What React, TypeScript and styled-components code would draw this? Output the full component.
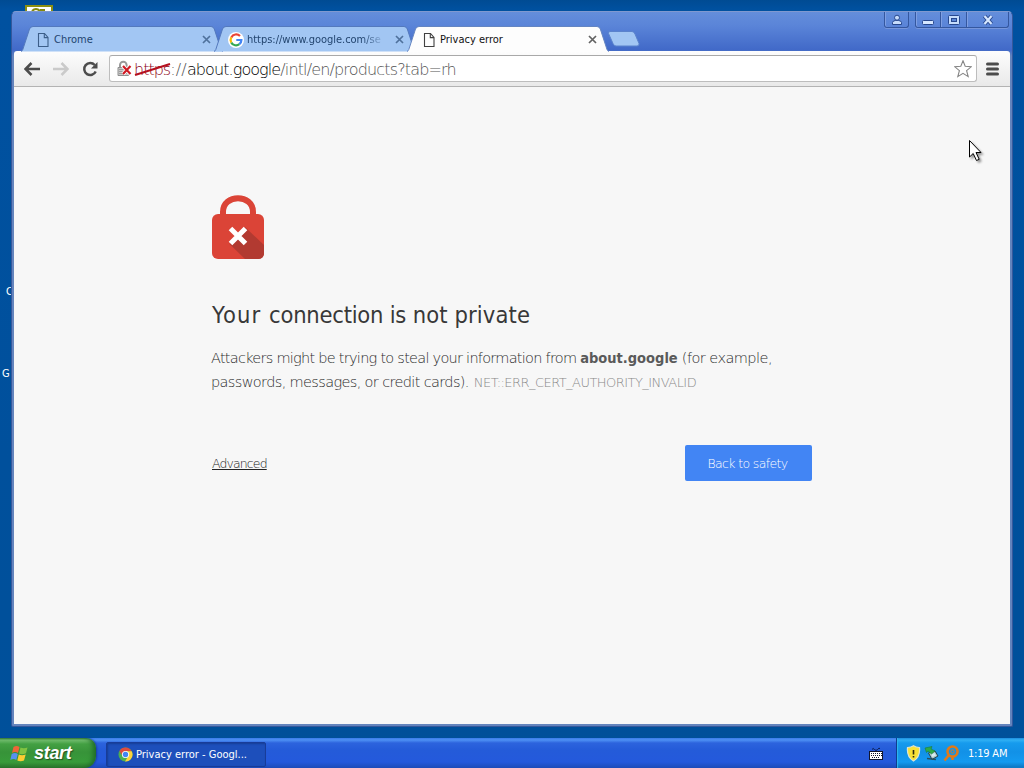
import React from 'react'
import styled, { createGlobalStyle } from 'styled-components'

const GlobalStyle = createGlobalStyle`
  * {
    box-sizing: border-box;
  }

  body {
    margin: 0;
    overflow: hidden;
    font-family: 'DejaVu Sans Condensed', 'DejaVu Sans', sans-serif;
    font-stretch: condensed;
    cursor: default;
  }

  svg {
    display: block;
    flex-shrink: 0;
  }
`

const Desktop = styled.div`
  position: relative;
  width: 1024px;
  height: 768px;
  overflow: hidden;
  display: flex;
  flex-direction: column;
  justify-content: space-between;
  background: linear-gradient(#004b93 0, #0051a0 10px, #00509c 60%, #00509a 100%);
`

const Shortcut = styled.div<{ $x: number; $y: number }>`
  position: absolute;
  left: ${p => p.$x}px;
  top: ${p => p.$y}px;
  color: #fff;
  font-size: 11px;
  line-height: 14px;
`

const Window = styled.div`
  position: relative;
  margin: 11px 11px 0 11px;
  width: 1002px;
  height: 716px;
  flex-shrink: 0;
  display: flex;
  flex-direction: column;
  padding: 0 2px 2px 2px;
  border: 1px solid #35589c;
  border-top-color: #8099cf;
  border-radius: 5px 5px 2px 2px;
  background: linear-gradient(#648edb 0, #5a84d8 14px, #4169c8 38px, #6484bd 44px, #6484bd 100%);
`

const TitleBar = styled.div`
  height: 39px;
  display: flex;
  justify-content: space-between;
  align-items: flex-start;
`

const TabStrip = styled.div`
  display: flex;
  padding: 14px 0 0 7px;
`

const TabItem = styled.div<{ $active?: boolean }>`
  position: relative;
  z-index: ${p => (p.$active ? 2 : 1)};
  width: 202px;
  height: 26px;
  margin-right: -9px;
  padding: 1px 12px 0 14px;
  display: flex;
  align-items: center;
  color: ${p => (p.$active ? '#111' : '#23456f')};

  > svg:first-child {
    position: absolute;
    top: 0;
    left: 0;
    z-index: -1;
  }
`

const TabTitle = styled.span<{ $fade?: boolean; $spacing?: number }>`
  flex: 1;
  margin-left: 3px;
  margin-right: 10px;
  white-space: nowrap;
  font-size: 11px;
  line-height: 16px;
  letter-spacing: ${p => p.$spacing || 0}px;
  ${p => p.$fade && 'mask-image: linear-gradient(90deg, #000 84%, rgba(0, 0, 0, 0.2) 97%);'}
`

const NewTab = styled.div`
  padding: 5px 0 0 7px;
`

const WindowControls = styled.div`
  display: flex;
  padding-right: 1px;
`

const ControlGroup = styled.div`
  display: flex;
  height: 16px;
  margin-left: 6px;
  border: 1px solid #34579f;
  border-top: none;
  border-radius: 0 0 3px 3px;
  box-shadow: inset 1px 0 0 #7f9fe2, 0 1px 0 #7796db;
`

const Control = styled.div<{ $width: number }>`
  width: ${p => p.$width}px;
  display: flex;
  align-items: center;
  justify-content: center;

  & + & {
    border-left: 1px solid #34579f;
    box-shadow: inset 1px 0 0 #7f9fe2;
  }
`

const Toolbar = styled.div`
  height: 36px;
  flex-shrink: 0;
  display: flex;
  align-items: center;
  padding: 0 10px 0 10px;
  border-bottom: 1px solid #b3b3b3;
  border-radius: 3px 3px 0 0;
  background: linear-gradient(#fdfdfd, #e9e9e9);
`

const NavButton = styled.div`
  width: 29px;
  height: 18px;
`

const Omnibox = styled.div`
  width: 868px;
  height: 27px;
  margin-right: 9px;
  margin-left: -2px;
  display: flex;
  align-items: center;
  padding: 0 4px 0 7px;
  border: 1px solid #bdbdbd;
  border-top-color: #a9a9a9;
  border-radius: 3px;
  background: #fff;
`

const Url = styled.div`
  flex: 1;
  display: flex;
  align-items: center;
  margin-left: 1px;
  padding-top: 2px;
  font-family: 'DejaVu Sans', sans-serif;
  font-weight: 200;
  font-size: 16px;
  line-height: 22px;
  color: #555;
`

const UrlPart = styled.span<{ $color?: string; $spacing?: number }>`
  color: ${p => p.$color || 'inherit'};
  letter-spacing: ${p => p.$spacing || 0}px;
`

const Scheme = styled.span`
  position: relative;
  color: #8c0014;
  letter-spacing: -1px;

  svg {
    position: absolute;
    left: 0;
    top: 3px;
  }
`

const Page = styled.main`
  flex: 1;
  padding: 108px 198px 0 197px;
  background: #f7f7f7;
  color: #2c2c2c;
`

const Heading = styled.h1`
  margin: 39px 0 14px 1px;
  font-family: 'DejaVu Sans Condensed', 'DejaVu Sans', sans-serif;
  font-weight: 400;
  font-size: 23.5px;
  line-height: 34px;
  color: #383838;
  white-space: nowrap;
`

const Line = styled.p`
  margin: 0;
  font-family: 'DejaVu Sans', sans-serif;
  font-weight: 200;
  font-size: 14.5px;
  line-height: 24px;
  white-space: nowrap;
`

const Words = styled.span<{ $spacing: number }>`
  letter-spacing: ${p => p.$spacing}px;
`

const Domain = styled.strong`
  font-family: 'DejaVu Sans Condensed', 'DejaVu Sans', sans-serif;
  font-size: 14.5px;
  font-weight: 700;
  color: #5a5a5a;
`

const ErrorCode = styled.span`
  margin-left: 5px;
  font-size: 13px;
  letter-spacing: -0.54px;
  color: #888;
`

const Actions = styled.div`
  display: flex;
  justify-content: space-between;
  align-items: center;
  margin-top: 50px;
  padding-left: 1px;
  font-family: 'DejaVu Sans', sans-serif;
  font-weight: 200;
  font-size: 12.5px;
`

const AdvancedLink = styled.a`
  letter-spacing: -0.88px;
  text-decoration: underline;
  color: #222;
`

const SafetyButton = styled.button`
  width: 127px;
  height: 36px;
  padding: 0 2px 0 0;
  border: none;
  border-radius: 2px;
  background: #4285f4;
  color: #fff;
  font: inherit;
  letter-spacing: -0.63px;
`

const Cursor = styled.svg`
  position: absolute;
  left: 968px;
  top: 139px;
  filter: drop-shadow(2px 2px 1px rgba(0, 0, 0, 0.4));
`

const Taskbar = styled.div`
  display: flex;
  height: 30px;
  background: linear-gradient(#3a7bea 0, #4d90f4 2px, #2c63dd 5px, #245bd9 12px, #2459dc 24px, #1d4bb8 100%);
`

const StartButton = styled.div`
  width: 96px;
  height: 30px;
  display: flex;
  align-items: center;
  padding-left: 10px;
  border-radius: 0 10px 12px 0;
  background: linear-gradient(#327a34 0, #72bd6e 2px, #43a043 6px, #379339 14px, #389b3a 24px, #2a742c 100%);
  box-shadow: inset -5px 0 5px -2px #1f6b27, 1px 0 2px #173f9c;
`

const StartLabel = styled.span`
  margin-left: 5px;
  font-family: 'Liberation Sans', sans-serif;
  font-size: 18px;
  line-height: 24px;
  font-style: italic;
  font-weight: 700;
  letter-spacing: -0.3px;
  color: #fff;
  text-shadow: 1px 1px 1px #245222;
`

const TaskButton = styled.div`
  width: 160px;
  height: 25px;
  margin: 4px 0 0 10px;
  display: flex;
  align-items: center;
  padding: 0 0 0 11px;
  border: 1px solid #183c98;
  border-radius: 2px;
  background: #1d4fbb;
  box-shadow: inset 1px 1px 2px #163d95;
  color: #fff;
`

const TaskLabel = styled.span`
  margin-left: 3px;
  font-size: 11px;
  line-height: 16px;
  letter-spacing: 0;
  white-space: nowrap;
`

const Language = styled.div`
  flex: 1;
  display: flex;
  align-items: center;
  justify-content: flex-end;
  padding: 2px 13px 0 0;
`

const Tray = styled.div`
  width: 128px;
  display: flex;
  align-items: center;
  padding-left: 9px;
  border-left: 1px solid #103d8f;
  background: linear-gradient(#1d87dc 0, #30b0f4 2px, #169bed 5px, #1291e7 14px, #149af0 24px, #0d72bd 100%);
  box-shadow: inset 1px 0 1px #30b8ef;
  color: #fff;
`

const TrayIcons = styled.div`
  display: flex;
  align-items: center;
  gap: 3px;
`

const Clock = styled.span`
  margin-left: 9px;
  font-size: 11px;
  letter-spacing: -0.2px;
  white-space: nowrap;
`

const PageIcon: React.FC = () => (
  <svg width="16" height="16" viewBox="-2 0 16 16" fill="none" stroke="currentColor" strokeWidth="1.1" opacity="0.8">
    <path d="M1.500 1.500H7.500L11 5.500V14.500H1.500Z" />
    <path d="M7.300 1.500V5.600H11" />
  </svg>
)

const GoogleIcon: React.FC = () => (
  <svg width="16" height="16" viewBox="0 0 16 16" fill="none">
    <circle cx="8" cy="8" r="8" fill="#fff" />
    <path d="M12 4.1A5.4 5.4 0 0 0 3.3 5.4" stroke="#ea4335" strokeWidth="2.2" />
    <path d="M3.3 5.4A5.4 5.4 0 0 0 3.3 10.6" stroke="#fbbc05" strokeWidth="2.2" />
    <path d="M3.3 10.6A5.4 5.4 0 0 0 11.4 12.2" stroke="#34a853" strokeWidth="2.2" />
    <path d="M11.4 12.2A5.4 5.4 0 0 0 13.4 8H8.3" stroke="#4285f4" strokeWidth="2.2" />
  </svg>
)

const CloseIcon: React.FC = () => (
  <svg width="9" height="9" viewBox="0 0 9 9" stroke="currentColor" strokeWidth="1.7" opacity="0.65">
    <path d="M1 1L8 8M8 1L1 8" />
  </svg>
)

type TabProps = {
  title: string
  active?: boolean
  fade?: boolean
  spacing?: number
  icon: React.ReactNode
}

const Tab: React.FC<TabProps> = ({ title, active, fade, spacing, icon }) => (
  <TabItem $active={active}>
    <svg width="202" height="26" viewBox="0 0 202 26">
      <path
        d="M0 25.500Q1.200 25 1.800 23.500L8.500 3Q9.500 .5 12 .5H190Q192.300 .5 193.300 3L200 23.500Q200.600 25 202 25.500"
        fill={active ? '#fdfdfd' : '#a2c6f3'}
        stroke={active ? '#6485c2' : '#5479bd'}
      />
      {active && <path d="M1 25.500H201" stroke="#fdfdfd" />}
    </svg>
    {icon}
    <TabTitle $fade={fade} $spacing={spacing}>{title}</TabTitle>
    <CloseIcon />
  </TabItem>
)

const Arrow: React.FC<{ color: string; flip?: boolean }> = ({ color, flip }) => (
  <svg width="16" height="18" viewBox="0 0 16 18" fill="none" stroke={color} strokeWidth="2.5">
    <path d={flip ? 'M0 9H14M8.500 3L14.500 9L8.500 15' : 'M16 9H2M7.500 3L1.500 9L7.500 15'} />
  </svg>
)

const BrokenLock: React.FC = () => (
  <svg width="16" height="18" viewBox="0 0 16 18" fill="none">
    <path d="M3 8V5A3.300 3.300 0 0 1 9.600 5V8" stroke="#999" strokeWidth="2" />
    <path d="M1 7.500H11.500V15.500H1Z" fill="#c9c9c9" stroke="#8f8f8f" />
    <path d="M2 9.500H10M2 11.500H10M2 13.500H10" stroke="#929292" strokeWidth=".8" />
    <path d="M6 6L13.500 14M13.500 6L6 14" stroke="#fff" strokeWidth="4" />
    <path d="M6 6L13.500 14M13.500 6L6 14" stroke="#cf1b24" strokeWidth="2.200" />
  </svg>
)

const RedLock: React.FC = () => (
  <svg width="54" height="64" viewBox="-1 0 54 64">
    <path d="M11 20V17C11 -1.500 41 -1.500 41 17V20" fill="none" stroke="#db4437" strokeWidth="6" />
    <rect y="19" width="52" height="45" rx="6" fill="#db4437" />
    <path d="M33 32L52 50V58Q52 64 46 64H33L17.500 49Z" fill="#b23a31" />
    <path d="M18.500 33.500L33.500 48.500M33.500 33.500L18.500 48.500" stroke="#fff" strokeWidth="5" />
  </svg>
)

const WindowsFlag: React.FC = () => (
  <svg width="19" height="19" viewBox="0 0 19 19">
    <path d="M3.500 3Q6.500 1 9.500 3L8 9Q5 7 2 9Z" fill="#ef6538" />
    <path d="M10.500 3.500Q13.500 5 17.500 3.500L16 9.300Q12 11 9 9.500Z" fill="#80c342" />
    <path d="M1.700 10Q5 8 7.800 10L6.300 16Q3.500 14 .3 16Z" fill="#5791f0" />
    <path d="M8.800 10.500Q12 12 15.700 10.500L14 16.500Q10.500 18 7.300 16.500Z" fill="#fccc32" />
  </svg>
)

const ChromeIcon: React.FC = () => (
  <svg width="15" height="15" viewBox="0 0 16 16">
    <circle cx="8" cy="8" r="7.500" fill="#4caf50" />
    <path d="M1.500 4.200A7.500 7.500 0 0 1 14.600 4.500H8L4.800 9.500Z" fill="#dc4b3e" />
    <path d="M14.600 4.500A7.500 7.500 0 0 1 7.500 15.500L11 9.700L8 4.500Z" fill="#fbd23c" />
    <circle cx="8" cy="8" r="3.800" fill="#fff" />
    <circle cx="8" cy="8" r="2.900" fill="#4285f4" />
  </svg>
)

const App: React.FC = () => {
  return (
    <>
      <GlobalStyle />
      <Desktop>
        <Shortcut $x={25} $y={5}>
          <svg width="28" height="12" viewBox="0 0 28 12">
            <rect x="1" y="1" width="26" height="11" fill="#fff" stroke="#8c8f10" strokeWidth="2" />
            <path d="M7 6Q11 2 15 6M15 5H20" stroke="#86890c" strokeWidth="2" fill="none" />
          </svg>
        </Shortcut>
        <Shortcut $x={6} $y={285}>C</Shortcut>
        <Shortcut $x={2} $y={367}>G</Shortcut>

        <Window>
          <TitleBar>
            <TabStrip>
              <Tab title="Chrome" icon={<PageIcon />} />
              <Tab title="https://www.google.com/se" fade spacing={-0.02} icon={<GoogleIcon />} />
              <Tab title="Privacy error" active icon={<PageIcon />} />
              <NewTab>
                <svg width="33" height="17" viewBox="0 0 33 17">
                  <path d="M3 .5H25Q27 .5 28 3L32 12.500Q32.500 15 30 15H9Q7 15 6 12.500L1.500 2.500Q1 .5 3 .5Z" fill="#a2c6f3" stroke="#5b83cc" />
                </svg>
              </NewTab>
            </TabStrip>
            <WindowControls>
              <ControlGroup>
                <Control $width={23}>
                  <svg width="12" height="12" viewBox="0 0 12 12" fill="#c6dcfb" stroke="#28488e">
                    <path d="M1.500 10.500V8.500Q2 6.500 4.500 6.500H7.500Q10 6.500 10.500 8.500V10.500Z" />
                    <circle cx="6" cy="3.700" r="2.500" />
                  </svg>
                </Control>
              </ControlGroup>
              <ControlGroup>
                <Control $width={24}>
                  <svg width="12" height="12" viewBox="0 0 12 12">
                    <rect x=".5" y="6.500" width="11" height="4" rx="1" fill="#d6e7ff" stroke="#28488e" />
                  </svg>
                </Control>
                <Control $width={26}>
                  <svg width="12" height="12" viewBox="0 0 12 12">
                    <rect x=".5" y="1.500" width="11" height="9" rx="1" fill="#c6dcfb" stroke="#28488e" />
                    <rect x="3.500" y="4.500" width="5" height="3" fill="#5c86d6" stroke="#28488e" />
                  </svg>
                </Control>
                <Control $width={42}>
                  <svg width="12" height="12" viewBox="0 0 12 12" fill="none">
                    <path d="M2.500 2L9.500 10M9.500 2L2.500 10" stroke="#28488e" strokeWidth="4" />
                    <path d="M2.500 2L9.500 10M9.500 2L2.500 10" stroke="#d6e7ff" strokeWidth="2.200" />
                  </svg>
                </Control>
              </ControlGroup>
            </WindowControls>
          </TitleBar>

          <Toolbar>
            <NavButton><Arrow color="#4c4c4c" /></NavButton>
            <NavButton><Arrow color="#cacaca" flip /></NavButton>
            <NavButton>
              <svg width="17" height="18" viewBox="0 0 17 18" fill="none">
                <path d="M12.700 5A6 6 0 1 0 13.700 11.500" stroke="#4c4c4c" strokeWidth="2.500" />
                <path d="M15.500 2V8.500H9Z" fill="#4c4c4c" />
              </svg>
            </NavButton>
            <Omnibox>
              <BrokenLock />
              <Url>
                <Scheme>
                  https
                  <svg width="38" height="16" viewBox="0 0 38 16">
                    <path d="M1 13L36 2" stroke="#b5101f" strokeWidth="2" />
                  </svg>
                </Scheme>
                <UrlPart $spacing={0.2}>://</UrlPart>
                <UrlPart $color="#000" $spacing={-0.92}>about.google</UrlPart>
                <UrlPart $spacing={-0.85}>/intl/en/products?tab=rh</UrlPart>
              </Url>
              <svg width="18" height="18" viewBox="0 0 18 18" fill="#fff" stroke="#858585" strokeWidth="1.100">
                <path d="M9 .8L11.200 6.300L17.200 6.800L12.600 10.600L14.200 16.600L9 13.300L3.800 16.600L5.400 10.600L.8 6.800L6.800 6.300Z" />
              </svg>
            </Omnibox>
            <svg width="13" height="14" viewBox="0 0 13 14" stroke="#4c4c4c" strokeWidth="3" strokeLinecap="round">
              <path d="M1.500 2H11.500M1.500 7H11.500M1.500 12H11.500" />
            </svg>
          </Toolbar>

          <Page>
            <RedLock />
            <Heading>
              <Words $spacing={1.1}>Your </Words>
              <Words $spacing={-0.23}>connection is </Words>
              <Words $spacing={0.12}>not private</Words>
            </Heading>
            <Line>
              <Words $spacing={-0.74}>Attackers might be trying to steal your information from </Words>
              <Domain>about.google</Domain>
              <Words $spacing={-0.54}> (for example,</Words>
            </Line>
            <Line>
              <Words $spacing={-0.64}>passwords, messages, or credit cards).</Words>
              <ErrorCode>NET::ERR_CERT_AUTHORITY_INVALID</ErrorCode>
            </Line>
            <Actions>
              <AdvancedLink>Advanced</AdvancedLink>
              <SafetyButton>Back to safety</SafetyButton>
            </Actions>
          </Page>
        </Window>

        <Cursor width="15" height="23" viewBox="0 0 15 23">
          <path d="M1.500 1.500V18L5.200 14.500L8.500 21.500L11.200 20.300L8 13.500H13Z" fill="#fff" stroke="#000" />
        </Cursor>

        <Taskbar>
          <StartButton>
            <WindowsFlag />
            <StartLabel>start</StartLabel>
          </StartButton>
          <TaskButton>
            <ChromeIcon />
            <TaskLabel>Privacy error - Googl...</TaskLabel>
          </TaskButton>
          <Language>
            <svg width="14" height="14" viewBox="0 0 14 14">
              <path d="M3 2.500Q4 .5 5.500 2.500T8.500 2.500T11 1.500" stroke="#0b1b4a" fill="none" />
              <rect x=".5" y="4.500" width="13" height="8" fill="#fff" stroke="#10162e" />
              <path d="M2 6.500H13M2 8.500H13M3 10.500H11" stroke="#10162e" strokeDasharray="1 1" />
            </svg>
          </Language>
          <Tray>
            <TrayIcons>
              <svg width="15" height="17" viewBox="0 0 15 17">
                <path d="M7.500 .8Q10 2.500 13.500 2.500Q14.500 12 7.500 16Q.5 12 1.500 2.500Q5 2.500 7.500 .8Z" fill="#f8e136" stroke="#dfe3d0" strokeWidth="1.200" />
                <path d="M7.500 5V9.500M7.500 11V12.500" stroke="#2d2a10" strokeWidth="1.600" />
              </svg>
              <svg width="16" height="16" viewBox="0 0 16 16">
                <path d="M4.500 8L11 6L14 11L8 14.500Z" fill="#b0c4ca" stroke="#20454f" />
                <path d="M7 9.500L10.500 8L12 10.500L8.500 12Z" fill="#d7edf2" />
                <path d="M3 13.500L12 14.500" stroke="#284e5c" strokeWidth="1.500" />
                <path d="M1 3L8 1.500L7 4L11 6L7.500 9L4 6L2.500 7.500Z" fill="#2faa48" stroke="#1b7c3a" strokeWidth=".6" />
              </svg>
              <svg width="16" height="17" viewBox="0 0 16 17" fill="none" stroke="#e07a18">
                <circle cx="9.500" cy="6.500" r="5" strokeWidth="2.600" />
                <path d="M6 10L1.500 15.500M9.500 12V15" strokeWidth="2.600" />
                <circle cx="9.500" cy="6.500" r="1.700" strokeWidth="1" />
              </svg>
            </TrayIcons>
            <Clock>1:19 AM</Clock>
          </Tray>
        </Taskbar>
      </Desktop>
    </>
  )
}

export default App
